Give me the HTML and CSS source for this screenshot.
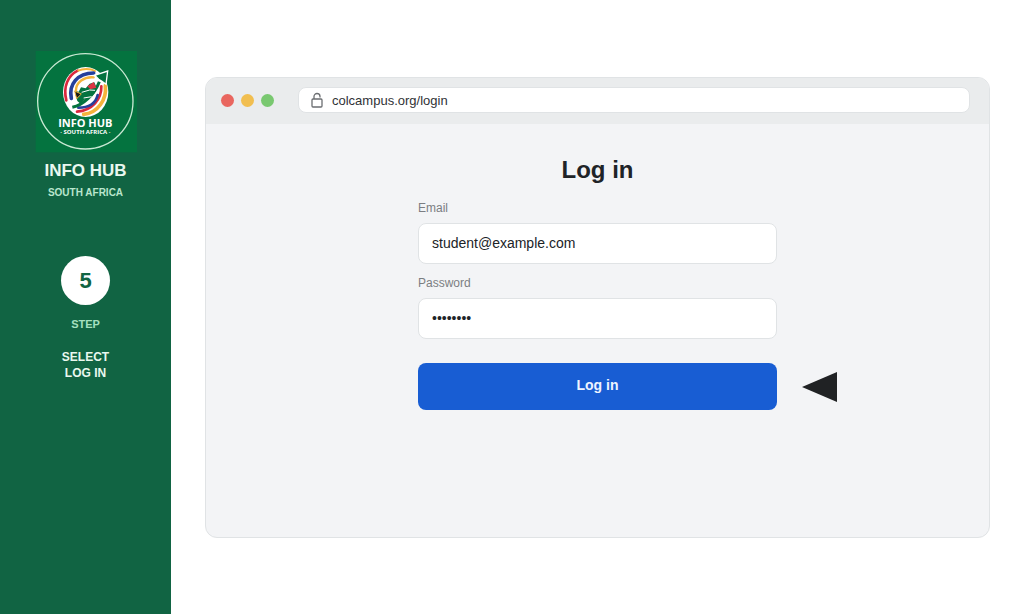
FILE: index.html
```html
<!DOCTYPE html>
<html lang="en">
<head>
<meta charset="utf-8">
<title>Info Hub South Africa – Step 5</title>
<link rel="stylesheet" href="styles.css">
</head>
<body>
<div class="page">
  <aside class="sidebar">
    <svg class="logo" viewBox="12 18 306 306" role="img" aria-label="Info Hub South Africa">
      <rect x="14" y="18" width="304" height="304" fill="#04733f"/>
      <circle cx="163" cy="169" r="143" fill="none" stroke="#c9e8d3" stroke-width="4"/>
      <ellipse cx="164" cy="141" rx="68" ry="75" fill="#fff"/>
      <g fill="none" stroke-linecap="round">
        <path d="M106 166C96 126 110 92 140 77" stroke="#d9283d" stroke-width="8"/>
        <path d="M142 77C156 70 178 70 192 78" stroke="#f5b33c" stroke-width="6"/>
        <path d="M121 160C112 118 140 84 188 84" stroke="#263f9b" stroke-width="11"/>
        <path d="M135 138C134 112 160 94 188 97" stroke="#f5b33c" stroke-width="7"/>
        <path d="M223 122C228 164 200 204 158 208" stroke="#f5b33c" stroke-width="11"/>
        <path d="M211 124C212 162 184 196 138 200" stroke="#d9283d" stroke-width="8"/>
        <path d="M200 150C194 176 172 188 142 188" stroke="#263f9b" stroke-width="8"/>
      </g>
      <path d="M124 187C156 180 190 150 205 110" fill="none" stroke="#04733f" stroke-width="9"/>
      <path d="M191 91L230 78L225 118L213 109L203 103Z" fill="#04733f" stroke="#fff" stroke-width="4"/>
      <path d="M131 137L143 140L150 127L164 130L176 116L190 112L196 126L191 145L176 160L160 164L149 177L139 168Z" fill="#04733f"/>
      <path d="M169 124L188 111L196 128L178 133Z" fill="#dc3544"/>
      <path d="M131 138L151 147L137 161Z" fill="#171c18" stroke="#f5b33c" stroke-width="3"/>
      <path d="M152 142L176 135L192 136M158 159L182 155" fill="none" stroke="#fff" stroke-width="3"/>
      <text class="logo-name" x="163" y="247" text-anchor="middle">INFO HUB</text>
      <text class="logo-place" x="163" y="268" text-anchor="middle">· SOUTH AFRICA ·</text>
    </svg>
    <p class="brand">INFO HUB</p>
    <p class="place">SOUTH AFRICA</p>
    <div class="number">5</div>
    <p class="step">STEP</p>
    <p class="action">SELECT<br>LOG IN</p>
  </aside>
  <main class="stage">
    <section class="browser">
      <header class="toolbar">
        <div class="dots"><span class="dot red"></span><span class="dot yellow"></span><span class="dot green"></span></div>
        <div class="address">
          <svg class="lock" viewBox="0 0 12 16" aria-hidden="true"><rect x="1" y="7" width="10" height="8" rx="1"/><path d="M3 7V4.500a3 3 0 0 1 6 0V5.500"/></svg>
          <input class="url" type="text" aria-label="Address" value="colcampus.org/login">
        </div>
      </header>
      <form class="login">
        <h1 class="title">Log in</h1>
        <label class="label" for="email">Email</label>
        <input class="field" id="email" type="email" value="student@example.com">
        <label class="label" for="password">Password</label>
        <input class="field" id="password" type="password" value="password">
        <div class="submit-row">
          <button class="submit" type="button">Log in</button>
          <svg class="pointer" viewBox="0 0 35 30" aria-hidden="true"><path d="M0 15L35 0V30Z"/></svg>
        </div>
      </form>
    </section>
  </main>
</div>
</body>
</html>
```
FILE: styles.css
```css
* { box-sizing: border-box; }
body {
  margin: 0;
  background: #fff;
  color: #202327;
  font-family: "Liberation Sans", Arial, sans-serif;
}
p, h1 { margin: 0; }
.page { display: flex; min-height: 100vh; }
.sidebar {
  display: flex;
  flex-direction: column;
  align-items: center;
  flex: 0 0 171px;
  padding-top: 51px;
  background: #116443;
  color: #e9f8ef;
  font-weight: bold;
  text-align: center;
}
.logo { width: 102px; height: 102px; }
.logo-name { font: bold 33px "Open Sans", sans-serif; fill: #fff; }
.logo-place { font: bold 18px "Open Sans", sans-serif; fill: #fff; }
.brand { margin-top: 8px; font-size: 17px; line-height: 20px; }
.place { margin-top: 5px; font-size: 10px; line-height: 14px; color: #b9e6cd; }
.number {
  width: 49px;
  height: 49px;
  margin-top: 56px;
  border-radius: 50%;
  background: #fff;
  color: #116443;
  font-size: 22px;
  line-height: 49px;
}
.step { margin-top: 12px; font-size: 11px; line-height: 14px; color: #a5e0c0; }
.action { margin-top: 18px; font-size: 12px; line-height: 16px; }
.stage { display: flex; flex: 1; min-width: 0; padding: 77px 34px 76px; }
.browser {
  flex: 1;
  min-width: 0;
  overflow: hidden;
  border: 1px solid #e0e3e5;
  border-radius: 12px;
  background: #f3f4f6;
}
.toolbar {
  display: flex;
  align-items: center;
  gap: 24px;
  height: 46px;
  padding: 0 19px 2px 15px;
  background: #eaeced;
}
.dots { display: flex; gap: 7px; }
.dot { width: 13px; height: 13px; border-radius: 50%; }
.red { background: #e9665f; }
.yellow { background: #f1be50; }
.green { background: #79c870; }
.address {
  display: flex;
  align-items: center;
  flex: 1;
  gap: 9px;
  height: 26px;
  padding: 0 12px;
  border: 1px solid #e0e3e5;
  border-radius: 8px;
  background: #fff;
}
.lock { width: 12px; height: 16px; fill: none; stroke: #6b6e71; stroke-width: 1.3; }
.url {
  flex: 1;
  min-width: 0;
  padding: 0;
  border: 0;
  background: none;
  color: #303236;
  font: 13px "Liberation Sans", Arial, sans-serif;
}
.login {
  display: flex;
  flex-direction: column;
  width: 100%;
  max-width: 359px;
  margin: 0 auto;
  padding-top: 32px;
}
.title { margin-bottom: 16px; font-size: 24px; line-height: 28px; text-align: center; }
.label { margin-bottom: 7px; font-size: 12px; line-height: 16px; color: #7b7e82; }
.field {
  width: 100%;
  height: 41px;
  margin-bottom: 11px;
  padding: 0 13px 2px;
  border: 1px solid #e0e3e5;
  border-radius: 8px;
  background: #fff;
  color: #202327;
  font: 14px "Liberation Sans", Arial, sans-serif;
}
.submit-row { position: relative; margin-top: 13px; }
.submit {
  display: block;
  width: 100%;
  height: 47px;
  padding: 0 0 4px;
  border: 0;
  border-radius: 8px;
  background: #185dd3;
  color: #eef4ff;
  font: bold 14px "Liberation Sans", Arial, sans-serif;
}
.pointer { position: absolute; top: 9px; left: calc(100% + 25px); width: 35px; height: 30px; fill: #202224; }
```
